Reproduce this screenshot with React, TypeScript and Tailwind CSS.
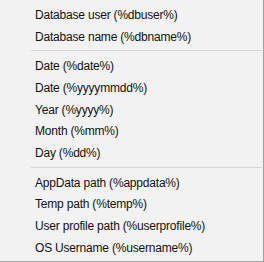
import React from "react";

// menu entries, null = separator
const items: (string | null)[] = [
  "Database user (%dbuser%)",
  "Database name (%dbname%)",
  null,
  "Date (%date%)",
  "Date (%yyyymmdd%)",
  "Year (%yyyy%)",
  "Month (%mm%)",
  "Day (%dd%)",
  null,
  "AppData path (%appdata%)",
  "Temp path (%temp%)",
  "User profile path (%userprofile%)",
  "OS Username (%username%)",
];

export default function App() {
  return (
    <div className="w-[264px] h-[262px] bg-[#f2f2f2] border-r border-b border-[#a0a0a0] pt-[4px] font-['Liberation_Sans',sans-serif] text-[12px] tracking-[-0.2px] text-[#111] overflow-hidden">
      {items.map((item, i) =>
        item === null ? (
          <div key={i} className="ml-[31px] mr-[1px] mt-[3px] mb-[4px] h-px bg-[#d7d7d7]" />
        ) : (
          <div key={i} className="h-[21.7px] flex items-center pl-[35px] leading-none whitespace-nowrap">
            {item}
          </div>
        )
      )}
    </div>
  );
}
